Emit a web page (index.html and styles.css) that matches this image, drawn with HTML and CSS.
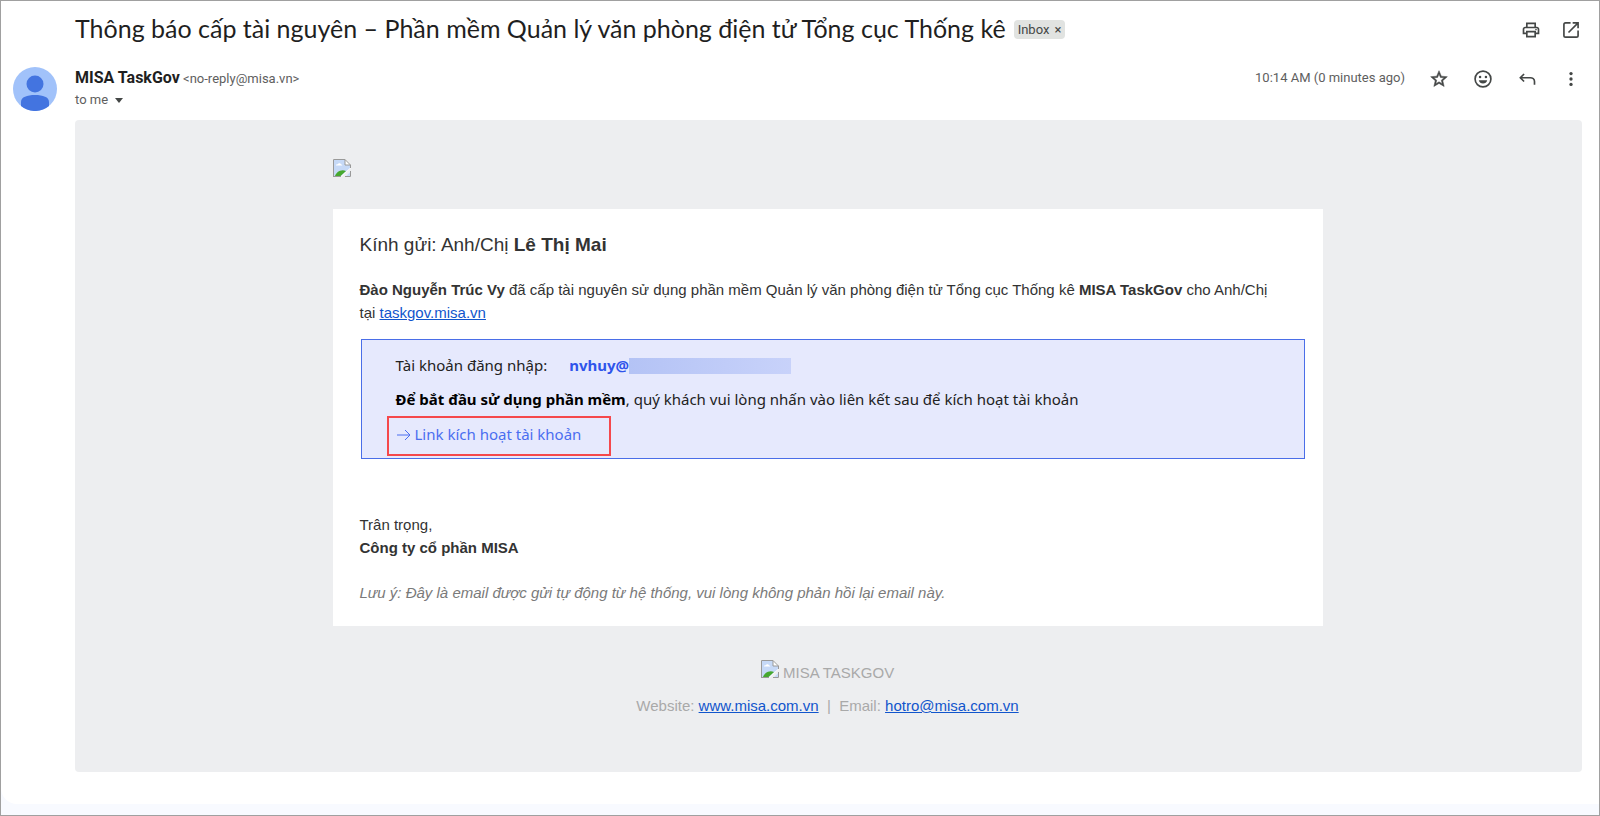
FILE: index.html
```html
<!DOCTYPE html>
<html lang="vi">
<head>
    <meta charset="UTF-8">
    <meta name="viewport" content="width=device-width, initial-scale=1.0">
    <title>Thông báo cấp tài nguyên</title>
    <link rel="stylesheet" href="styles.css">
</head>
<body>
    <svg class="sprite" aria-hidden="true">
        <symbol id="broken" viewBox="0 0 18 18">
            <path d="M0 0h12l6 6v3L8 18H0zM18 12v6h-6z" fill="#fff"/>
            <path d="M1 1h11v5h5v3l-9 8H1z" fill="#c6d9f7"/>
            <path d="M3 6.500c0-1 1-1.500 1.800-1.200C5.300 3.700 7.700 3.800 8 5.500c1 0 1.300.5 1.300 1z" fill="#fff"/>
            <path d="M2 17c1-3.500 6-7.500 11-5l-5.500 5z" fill="#46a82e"/>
            <path d="M17 13v4h-4z" fill="#c6d9f7"/>
            <path d="M.5 18V.5H12L17.500 6v3M12 .5V6h5.500M0 17.500h8M12 17.500h5.500V12" fill="none" stroke="#999"/>
        </symbol>
    </svg>

    <main class="mail">
        <header class="subject">
            <h1>Thông báo cấp tài nguyên – Phần mềm Quản lý văn phòng điện tử Tổng cục Thống kê</h1>
            <span class="chip">Inbox <button type="button" aria-label="Remove label">×</button></span>
            <div class="actions">
                <button type="button" class="icon" aria-label="Print">
                    <svg viewBox="0 0 24 24"><path d="M19 8h-1V3H6v5H5c-1.660 0-3 1.340-3 3v6h4v4h12v-4h4v-6c0-1.660-1.340-3-3-3zM8 5h8v3H8V5zm8 14H8v-4h8v4zm2-4v-2H6v2H4v-4c0-.550.450-1 1-1h14c.550 0 1 .450 1 1v4h-2z"/><circle cx="18" cy="11.500" r="1"/></svg>
                </button>
                <button type="button" class="icon" aria-label="Open in new window">
                    <svg viewBox="0 0 24 24"><path d="M11.500 3.500h-6c-1 0-2 1-2 2v13c0 1 1 2 2 2h13c1 0 2-1 2-2v-6M14 3.500h6.500V10M20.500 3.500L9 15" fill="none" stroke="#444746" stroke-width="2"/></svg>
                </button>
            </div>
        </header>

        <section class="sender">
            <svg class="avatar" viewBox="0 0 44 44" role="img" aria-label="MISA TaskGov">
                <circle cx="22" cy="22" r="22" fill="#a1c2fa"/>
                <circle cx="22" cy="17" r="8.500" fill="#4374e0"/>
                <path d="M8 39v-4c0-5 6-7 14-7s14 2 14 7v4a22 22 0 0 1-28 0z" fill="#4374e0"/>
            </svg>
            <div class="from">
                <p class="name"><strong>MISA TaskGov</strong> <span>&lt;no-reply@misa.vn&gt;</span></p>
                <button type="button" class="to">to me <i class="caret"></i></button>
            </div>
            <time>10:14 AM (0 minutes ago)</time>
            <div class="actions">
                <button type="button" class="icon" aria-label="Star">
                    <svg viewBox="0 0 24 24"><path d="M22 9.240l-7.190-.620L12 2 9.190 8.630 2 9.240l5.460 4.730L5.820 21 12 17.270 18.180 21l-1.630-7.030L22 9.240zM12 15.400l-3.760 2.270 1-4.280-3.320-2.880 4.380-.380L12 6.100l1.710 4.040 4.380.380-3.320 2.880 1 4.280L12 15.400z" stroke="#444746" stroke-width=".6"/></svg>
                </button>
                <button type="button" class="icon" aria-label="Add reaction">
                    <svg viewBox="0 0 24 24"><circle cx="12" cy="12" r="9.500" fill="none" stroke="#444746" stroke-width="2"/><circle cx="8.500" cy="9.500" r="1.500"/><circle cx="15.500" cy="9.500" r="1.500"/><path d="M7 13.500h10c-.500 2.500-2.500 4-5 4s-4.500-1.500-5-4z"/></svg>
                </button>
                <button type="button" class="icon" aria-label="Reply">
                    <svg viewBox="0 0 24 24"><path d="M8.500 6L4 10.500 8.500 15M4 10.500h12c2.500 0 5 1.700 5 4.500v4" fill="none" stroke="#444746" stroke-width="2"/></svg>
                </button>
                <button type="button" class="icon" aria-label="More">
                    <svg viewBox="0 0 24 24"><circle cx="12" cy="5.500" r="2"/><circle cx="12" cy="12" r="2"/><circle cx="12" cy="18.500" r="2"/></svg>
                </button>
            </div>
        </section>

        <article class="message">
            <div class="logo"><svg class="broken"><use href="#broken"/></svg></div>

            <div class="card">
                <h2>Kính gửi: Anh/Chị <strong>Lê Thị Mai</strong></h2>
                <p><strong>Đào Nguyễn Trúc Vy</strong> đã cấp tài nguyên sử dụng phần mềm Quản lý văn phòng điện tử Tổng cục Thống kê <strong>MISA TaskGov</strong> cho Anh/Chị tại&nbsp;<a href="#">taskgov.misa.vn</a></p>

                <div class="account">
                    <p class="login">Tài khoản đăng nhập: <strong>nvhuy@</strong><span class="hidden-mail"></span></p>
                    <p><strong>Để bắt đầu sử dụng phần mềm</strong>, quý khách vui lòng nhấn vào liên kết sau để kích hoạt tài khoản</p>
                    <a href="#" class="activate"><svg viewBox="0 0 14 14"><path d="M0 7h13M8 2l5 5-5 5"/></svg>Link kích hoạt tài khoản</a>
                </div>

                <p>Trân trọng,<br><strong>Công ty cổ phần MISA</strong></p>
                <p class="note">Lưu ý: Đây là email được gửi tự động từ hệ thống, vui lòng không phản hồi lại email này.</p>
            </div>

            <footer>
                <p><svg class="broken"><use href="#broken"/></svg> MISA TASKGOV</p>
                <p>Website: <a href="#">www.misa.com.vn</a> &nbsp;|&nbsp; Email: <a href="#">hotro@misa.com.vn</a></p>
            </footer>
        </article>
    </main>
</body>
</html>
```
FILE: styles.css
```css
* {
    box-sizing: border-box;
}

body {
    margin: 0;
    min-height: 100vh;
    padding-bottom: 11px;
    border: 1px solid #a0a0a0;
    background: #f8faff;
    color: #1f1f1f;
    font-family: Roboto, Arial, sans-serif;
}

h1, h2, p {
    margin: 0;
    font-weight: normal;
}

button {
    padding: 0;
    border: none;
    background: none;
    color: inherit;
    font: inherit;
    cursor: pointer;
}

.sprite {
    display: none;
}

.mail {
    padding: 0 16px 32px 12px;
    border-bottom-left-radius: 16px;
    background: #fff;
}

.subject {
    display: flex;
    align-items: center;
    height: 57px;
    padding-left: 62px;
}

.subject h1 {
    padding-bottom: 4px;
    font-family: Lato, Roboto, sans-serif;
    font-size: 25px;
    line-height: 32px;
}

.chip {
    display: flex;
    gap: 5px;
    margin-left: 8px;
    padding: 0 4px;
    border-radius: 4px;
    background: #e1e3e1;
    color: #444746;
    font-size: 13px;
    line-height: 19px;
}

.actions {
    display: flex;
    gap: 20px;
}

.subject .actions {
    gap: 16px;
    margin-left: auto;
}

.icon {
    width: 24px;
    height: 24px;
}

.icon svg {
    display: block;
    width: 20px;
    height: 20px;
    margin: auto;
    fill: #444746;
}

.sender {
    display: flex;
    height: 62px;
    padding-top: 9px;
}

.avatar {
    width: 44px;
    height: 44px;
    margin-right: 18px;
}

.name {
    color: #5e5e5e;
    font-size: 13px;
    line-height: 22px;
}

.name strong {
    color: #1f1f1f;
    font-size: 16px;
}

.to {
    display: flex;
    align-items: center;
    gap: 7px;
    color: #5e5e5e;
    font-size: 13px;
    line-height: 20px;
}

.caret {
    border: 4px solid transparent;
    border-top: 5px solid #444746;
    border-bottom: none;
}

.sender time {
    margin-left: auto;
    margin-right: 22px;
    color: #5e5e5e;
    font-size: 13px;
    line-height: 22px;
}

.message {
    margin: 0 1px 0 62px;
    padding: 39px 17px 55px 15px;
    border-radius: 4px;
    background: #edeef0;
    color: #333;
    font-family: "Liberation Sans", Arial, sans-serif;
    font-size: 15px;
    line-height: 23px;
}

.message a {
    color: #1155cc;
}

.logo,
.card,
.message footer {
    max-width: 990px;
    margin: 0 auto;
}

.logo {
    height: 50px;
}

.broken {
    width: 18px;
    height: 18px;
}

.logo .broken {
    display: block;
}

.card {
    padding: 24px 18px 22px 27px;
    background: #fff;
}

.card h2 {
    margin-bottom: 22px;
    font-size: 19px;
}

.account {
    margin: 15px 0 54px 1px;
    padding: 14px 24px 2px 25px;
    border: 1px solid #4a6ee8;
    background: #e6e9fd;
    color: #222;
    font-family: "Noto Sans", sans-serif;
}

.account p {
    margin-bottom: 11px;
    padding-left: 9px;
}

.account p + p {
    margin-bottom: 5px;
}

.account p strong {
    color: #000;
}

.account .login {
    display: flex;
    align-items: center;
}

.account .login strong {
    margin-left: 22px;
    color: #2f54eb;
}

.hidden-mail {
    width: 162px;
    height: 16px;
    background: linear-gradient(to right, #b4c3f5, #c8d2fa);
}

.account .activate {
    display: flex;
    gap: 4px;
    width: 224px;
    height: 40px;
    padding: 5px 8px;
    border: 2px solid #f5484c;
    color: #4a6ef0;
    text-decoration: none;
}

.activate svg {
    width: 14px;
    height: 14px;
    margin-top: 5px;
    fill: none;
    stroke: #4a6ef0;
}

.note {
    margin-top: 22px;
    color: #7a7a7a;
    font-style: italic;
}

.message footer {
    padding-top: 34px;
    color: #a9a9a9;
    text-align: center;
}

.message footer p + p {
    margin-top: 10px;
}
```
